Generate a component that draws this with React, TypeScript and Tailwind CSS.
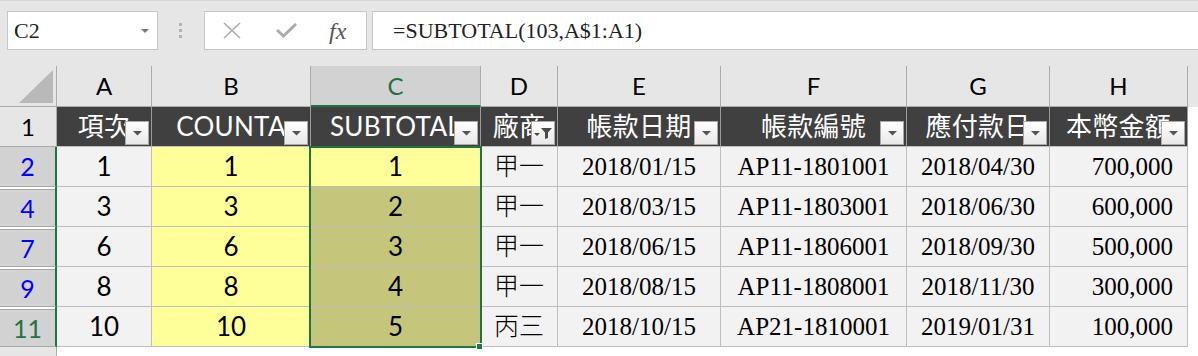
const LETTERS = ['A', 'B', 'C', 'D', 'E', 'F', 'G', 'H'];
const HEADERS = ['項次', 'COUNTA', 'SUBTOTAL', '廠商', '帳款日期', '帳款編號', '應付款日', '本幣金額'];

const ROWS = [
  { n: 2, a: '1', b: '1', c: '1', d: '甲一', e: '2018/01/15', f: 'AP11-1801001', g: '2018/04/30', h: '700,000' },
  { n: 4, a: '3', b: '3', c: '2', d: '甲一', e: '2018/03/15', f: 'AP11-1803001', g: '2018/06/30', h: '600,000' },
  { n: 7, a: '6', b: '6', c: '3', d: '甲一', e: '2018/06/15', f: 'AP11-1806001', g: '2018/09/30', h: '500,000' },
  { n: 9, a: '8', b: '8', c: '4', d: '甲一', e: '2018/08/15', f: 'AP11-1808001', g: '2018/11/30', h: '300,000' },
  { n: 11, a: '10', b: '10', c: '5', d: '丙三', e: '2018/10/15', f: 'AP21-1810001', g: '2019/01/31', h: '100,000' },
];

const sans = "font-['Lato','Noto_Sans_CJK_TC',sans-serif]";
const serif = "font-['Liberation_Serif','Noto_Sans_CJK_TC',serif]";

function FilterButton({ filtered }: { filtered?: boolean }) {
  return (
    <span className="absolute bottom-[1px] right-[2px] flex h-[24px] w-[24px] items-center justify-center border border-[#a9a9a9] bg-linear-to-b from-white to-[#e8e8e8]">
      {filtered ? (
        <svg width="20" height="14" viewBox="0 0 20 14" fill="#4a4a4a">
          <path d="M1 7 L7 7 L4 10 Z" />
          <path d="M8 2 L19 2 L15 6.5 L15 12 L12 13 L12 6.5 Z" />
        </svg>
      ) : (
        <svg width="9" height="5" viewBox="0 0 9 5" fill="#555">
          <path d="M0 0 L9 0 L4.5 4.5 Z" />
        </svg>
      )}
    </span>
  );
}

export default function App() {
  return (
    <div className="h-[356px] w-[1198px] overflow-hidden bg-white">
      {/* formula bar */}
      <div className="flex h-[66px] items-start border-t border-[#d8d8d8] bg-[#e6e6e6] pt-[10px]">
        <div className="ml-[7px] flex h-[39px] w-[151px] items-center justify-between border border-[#c6c6c6] bg-white pl-[6px] pr-[8px]">
          <span className={`${serif} text-[22px] text-[#222]`}>C2</span>
          <svg width="8" height="4" viewBox="0 0 8 4" fill="#7a7a7a">
            <path d="M0 0 L8 0 L4 4 Z" />
          </svg>
        </div>
        <div className="ml-[20px] flex h-[39px] w-[4px] flex-col items-center justify-center gap-[3px]">
          <span className="h-[3px] w-[3px] bg-[#b3b3b3]" />
          <span className="h-[3px] w-[3px] bg-[#b3b3b3]" />
          <span className="h-[3px] w-[3px] bg-[#b3b3b3]" />
        </div>
        <div className="ml-[22px] flex h-[39px] w-[163px] items-center border border-[#c6c6c6] bg-white">
          <svg className="ml-[18px]" width="18" height="17" viewBox="0 0 18 17" stroke="#ababab" strokeWidth="1.6">
            <path d="M1 1 L17 16 M17 1 L1 16" />
          </svg>
          <svg className="ml-[35px]" width="21" height="15" viewBox="0 0 21 15" fill="none" stroke="#ababab" strokeWidth="3">
            <path d="M1 7 L7.5 13 L20 1" />
          </svg>
          <span className="ml-[32px] font-['Liberation_Serif',serif] text-[24px] italic text-[#555]">fx</span>
        </div>
        <div className="ml-[5px] flex h-[39px] flex-1 items-center border-y border-l border-[#c6c6c6] bg-white pl-[20px]">
          <span className={`${serif} text-[22px] text-[#222]`}>=SUBTOTAL(103,A$1:A1)</span>
        </div>
      </div>

      {/* sheet */}
      <div className="relative">
        <div className="grid grid-cols-[57px_95px_159px_170px_77px_163px_186px_143px_138px_1fr]">
          {/* column letters */}
          <div className="relative h-[41px] border-r border-b border-[#ababab] bg-[#e6e6e6]">
            <svg className="absolute bottom-[3px] right-[3px]" width="34" height="33" viewBox="0 0 34 33" fill="#b9b9b9">
              <path d="M0 33 L34 33 L34 0 Z" />
            </svg>
          </div>
          {LETTERS.map((l) =>
            l === 'C' ? (
              <div key={l} className={`${sans} flex h-[41px] items-center justify-center border-r border-b-2 border-r-[#ababab] border-b-[#217346] bg-[#d2d2d2] text-[24px] text-[#217346]`}>
                {l}
              </div>
            ) : (
              <div key={l} className={`${sans} flex h-[41px] items-center justify-center border-r border-b border-[#ababab] bg-[#e6e6e6] text-[24px] text-black`}>
                {l}
              </div>
            ),
          )}
          <div className="h-[41px] bg-[#e6e6e6]" />

          {/* header row */}
          <div className={`${sans} flex h-[40px] items-center justify-center border-r border-b border-[#ababab] bg-[#e6e6e6] text-[24px] text-black`}>
            1
          </div>
          {HEADERS.map((h, i) => (
            <div key={h} className={`${sans} relative flex h-[40px] items-center justify-center overflow-hidden whitespace-nowrap border-r border-b border-r-[#9a9a9a] border-b-[#bfbfbf] bg-[#404040] text-[26px] tracking-[0.3px] text-white`}>
              {h}
              <FilterButton filtered={i === 3} />
            </div>
          ))}
          <div className="h-[40px] bg-white" />

          {/* data rows */}
          {ROWS.map((r, idx) => (
            <div key={r.n} className="contents">
              <div className="flex h-[40px] flex-col border-r-2 border-b border-r-[#217346] border-b-[#a9a9a9] bg-[#d2d2d2]">
                {idx > 0 && <div className="h-[3px] shrink-0 border-b border-[#a9a9a9] bg-white" />}
                <div className={`${sans} flex flex-1 items-center justify-center text-[25px] ${r.n === 11 ? 'text-[#217346]' : 'text-[#0000ff]'}`}>
                  {r.n}
                </div>
              </div>
              <div className={`${sans} flex h-[40px] items-center justify-center border-r border-b border-[#bfbfbf] bg-[#f2f2f2] text-[26px] text-black`}>{r.a}</div>
              <div className={`${sans} flex h-[40px] items-center justify-center border-r border-b border-[#bfbfbf] bg-[#ffff99] text-[26px] text-black`}>{r.b}</div>
              <div className={`${sans} flex h-[40px] items-center justify-center border-r border-b border-[#bfbfbf] text-[26px] text-black ${idx === 0 ? 'bg-[#ffff99]' : 'bg-[#c5c67b]'}`}>{r.c}</div>
              <div className={`${serif} flex h-[40px] items-center justify-center border-r border-b border-[#bfbfbf] bg-[#f2f2f2] text-[25px] font-light text-black`}>{r.d}</div>
              <div className={`${serif} flex h-[40px] items-center justify-center border-r border-b border-[#bfbfbf] bg-[#f2f2f2] text-[25px] text-black`}>{r.e}</div>
              <div className={`${serif} flex h-[40px] items-center justify-center border-r border-b border-[#bfbfbf] bg-[#f2f2f2] text-[25px] text-black`}>{r.f}</div>
              <div className={`${serif} flex h-[40px] items-center justify-center border-r border-b border-[#bfbfbf] bg-[#f2f2f2] text-[25px] text-black`}>{r.g}</div>
              <div className={`${serif} flex h-[40px] items-center justify-end border-r border-b border-[#bfbfbf] bg-[#f2f2f2] pr-[14px] text-[25px] text-black`}>{r.h}</div>
              <div className="h-[40px] bg-white" />
            </div>
          ))}

          {/* next row, partly visible */}
          <div className="h-[20px] border-r border-[#ababab] bg-[#e6e6e6]" />
        </div>

        {/* selection C2:C11 */}
        <div className="pointer-events-none absolute left-[309px] top-[80px] h-[202px] w-[173px] border-2 border-[#217346]" />
        <div className="absolute left-[476px] top-[277px] h-[7px] w-[7px] border border-white bg-[#217346]" />
      </div>
    </div>
  );
}
